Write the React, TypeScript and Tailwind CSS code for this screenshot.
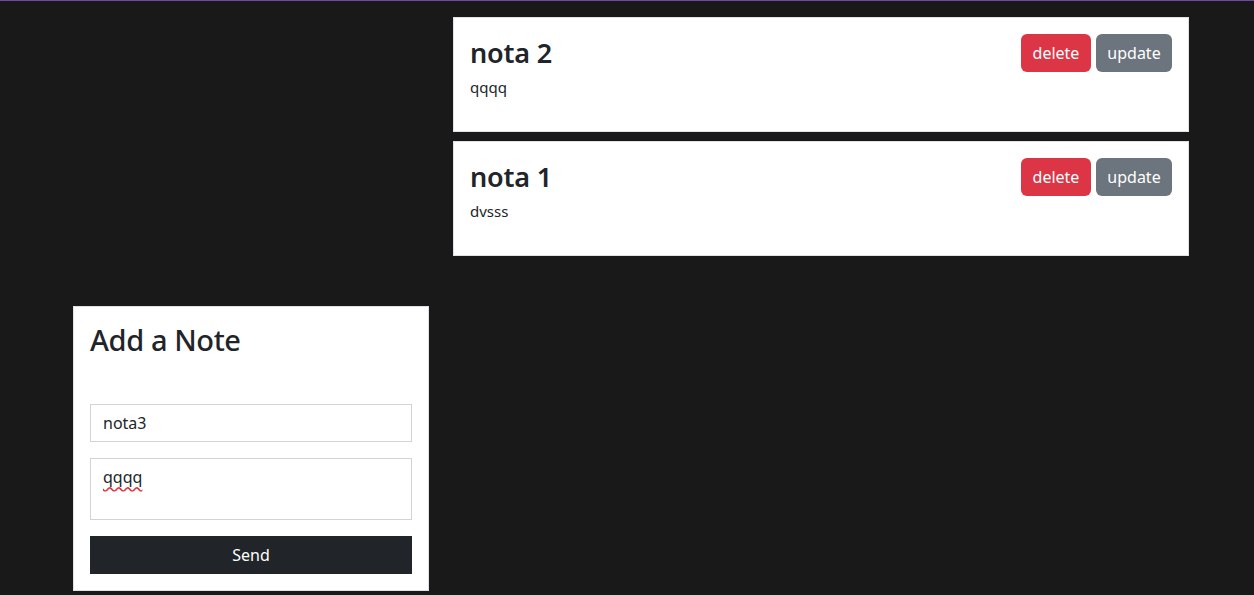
import React from "react";

const notes = [
  { title: "nota 2", body: "qqqq" },
  { title: "nota 1", body: "dvsss" },
];

export default function App() {
  return (
    <div
      className="min-h-[595px] w-full bg-[#191919] border-t border-[#7247a8] text-[#212529]"
      style={{ fontFamily: '"Noto Sans", "Open Sans", sans-serif' }}
    >
      <div className="flex pl-[73px] gap-[24px]">
        <div className="w-[356px] shrink-0 pt-[305px]">
          <div className="bg-white border border-[#dee2e6] p-4">
            <h2 className="text-[29px] leading-[34px] font-medium mb-[47px] tracking-[-0.4px]">Add a Note</h2>
            <form className="flex flex-col" onSubmit={(e) => e.preventDefault()}>
              <input
                defaultValue="nota3"
                className="h-[38px] w-full border border-[#ced4da] px-3 text-[16px] leading-6 text-[#212529] outline-none mb-4"
              />
              <textarea
                defaultValue="qqqq"
                rows={2}
                className="h-[62px] w-full border border-[#ced4da] px-3 py-[6px] text-[16px] leading-6 text-[#212529] outline-none resize-none mb-4 underline decoration-wavy decoration-[#e0333a] underline-offset-[3px]"
              />
              <button
                type="submit"
                className="h-[38px] w-full bg-[#212529] text-white text-[16px]"
              >
                Send
              </button>
            </form>
          </div>
        </div>
        <div className="w-[736px] shrink-0 pt-[16px] flex flex-col gap-[9px]">
          {notes.map((n) => (
            <div key={n.title} className="bg-white border border-[#dee2e6] px-4 pt-4 pb-4">
              <div className="flex justify-between items-start h-[41px]">
                <h3 className="text-[27px] leading-[38px] font-semibold tracking-[-0.2px]">{n.title}</h3>
                <div className="flex gap-[5px]">
                  <button className="h-[38px] w-[70px] rounded-[6px] bg-[#dc3545] text-white text-[16px]">
                    delete
                  </button>
                  <button className="h-[38px] w-[76px] rounded-[6px] bg-[#6c757d] text-white text-[16px]">
                    update
                  </button>
                </div>
              </div>
              <p className="text-[15px] leading-6 mb-4">{n.body}</p>
            </div>
          ))}
        </div>
      </div>
    </div>
  );
}
